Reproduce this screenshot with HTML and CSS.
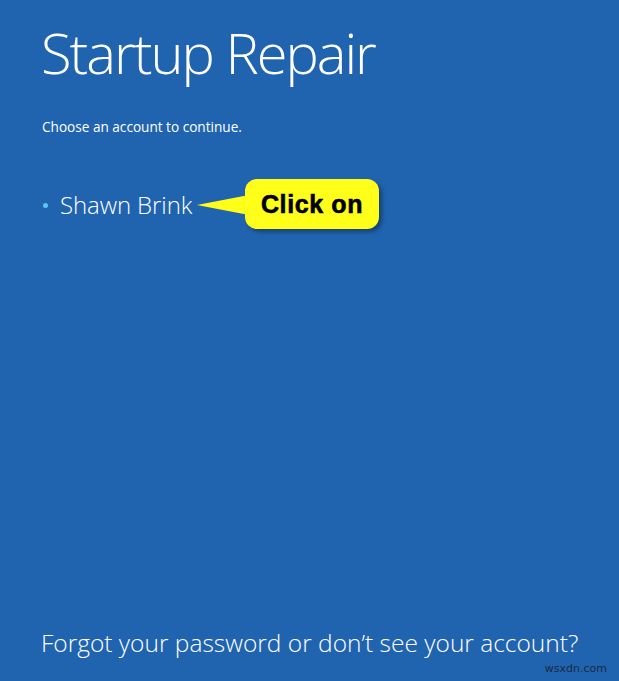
FILE: index.html
```html
<!DOCTYPE html>
<html>
<head>
<meta charset="utf-8">
<link rel="stylesheet" href="styles.css">
</head>
<body>
<div class="screen">
  <h1 class="title">Startup Repair</h1>
  <p class="prompt">Choose an account to continue.</p>
  <div class="account">
    <span class="bullet"></span>
    <span class="name">Shawn Brink</span>
    <div class="callout">
      <svg class="tail" width="52" height="20" viewBox="0 0 52 20"><polygon points="0,10 52,0 52,20" fill="#ffff1a"/></svg>
      <div class="bubble">Click on</div>
    </div>
  </div>
  <div class="footer">Forgot your password or don’t see your account?</div>
  <div class="mark">wsxdn.com</div>
</div>
</body>
</html>
```
FILE: styles.css
```css
html, body { margin: 0; padding: 0; }
body { background: #2064b0; }
.screen {
  position: relative;
  height: 681px;
  box-sizing: border-box;
  padding-left: 41px;
  display: flex;
  flex-direction: column;
  color: #fff;
  font-family: "Open Sans", "Noto Sans", sans-serif;
}
.title {
  margin: 14px 0 0 0;
  font-weight: 300;
  font-size: 56px;
  line-height: 76px;
  letter-spacing: -2px;
}
.prompt {
  margin: 28px 0 0 1px;
  font-size: 13.6px;
  line-height: 18px;
}
.account {
  position: relative;
  margin-top: 53px;
  display: flex;
  align-items: center;
  height: 30px;
}
.bullet {
  width: 5px; height: 5px;
  border-radius: 50%;
  background: #5cc4f2;
  margin: 2px 12px 0 2px;
}
.name {
  font-weight: 300;
  font-size: 24px;
  letter-spacing: -0.1px;
}
.callout {
  position: absolute;
  left: 156px;
  top: -10px;
  display: flex;
  align-items: center;
}
.tail { margin-right: -4px; margin-top: 2px; }
.bubble {
  background: #ffff1a;
  border-radius: 12px;
  width: 134px;
  height: 50px;
  display: flex;
  align-items: center;
  justify-content: center;
  color: #000;
  font-family: "Liberation Sans", Arial, sans-serif;
  font-weight: 700;
  font-size: 25px;
  letter-spacing: 0.6px;
  -webkit-text-stroke: 0.6px #000;
  box-shadow: 3px 3px 4px rgba(0,0,0,0.35);
}
.footer {
  margin-top: auto;
  margin-bottom: 22px;
  font-weight: 300;
  font-size: 24.5px;
  letter-spacing: 0;
}
.mark {
  position: absolute;
  right: 12px;
  bottom: 6px;
  font-family: "DejaVu Sans", sans-serif;
  font-size: 11px;
  color: #1a2a40;
}
```
